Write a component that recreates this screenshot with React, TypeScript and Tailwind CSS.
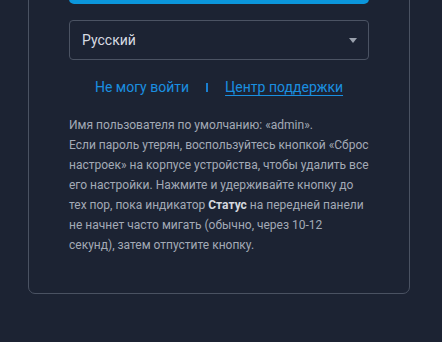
import React from 'react';

export default function App() {
  return (
    <div className="min-h-[342px] w-[442px] overflow-hidden bg-[#1c2333] font-['Roboto',sans-serif]">
      <div className="-mt-[77px] ml-[28px] w-[382px] rounded-[7px] border border-[#4a5262] px-[40px] pt-[40px] pb-[38px]">
        <button className="block h-[40px] w-full rounded-[5px] bg-[#0b96dc]" />

        <div className="mt-[16px] flex h-[40px] items-center justify-between rounded-[4px] border border-[#4b5363] pl-[12px] pr-[11px]">
          <span className="text-[14px] text-[#d7dbe2]">Русский</span>
          <svg width="8" height="5" viewBox="0 0 8 5" className="mt-[1px]">
            <path d="M0 0h8L4 5z" fill="#9aa1ad" />
          </svg>
        </div>

        <div className="mt-[17px] flex h-[20px] items-center justify-center gap-[17px] text-[14px] text-[#1a8fe0]">
          <span>Не могу войти</span>
          <span className="h-[9px] w-[2px] bg-[#1a7fd0]" />
          <span className="underline underline-offset-[3px]">Центр поддержки</span>
        </div>

        <p className="mt-[18px] text-[12px] leading-[20px] text-[#a3aab6]">
          Имя пользователя по умолчанию: «admin».
          <br />
          Если пароль утерян, воспользуйтесь кнопкой «Сброс настроек» на корпусе устройства, чтобы удалить все его настройки. Нажмите и удерживайте кнопку до тех пор, пока индикатор{' '}
          <b className="font-bold text-[#d4d8df]">Статус</b> на передней панели не начнет часто мигать (обычно, через 10-12 секунд), затем отпустите кнопку.
        </p>
      </div>
    </div>
  );
}
